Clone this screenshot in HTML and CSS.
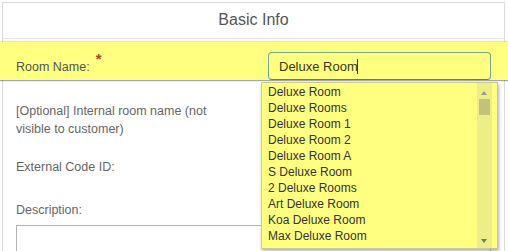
FILE: index.html
```html
<!DOCTYPE html>
<html lang="en">
<head>
    <meta charset="UTF-8">
    <meta name="viewport" content="width=device-width, initial-scale=1.0">
    <link rel="stylesheet" href="styles.css">
    <title>Basic Info</title>
</head>
<body>

<div class="panel">
    <div class="panelHeader">Basic Info</div>

    <!-- Room name row, highlighted -->
    <div class="row highlight">
        <label class="fieldLabel" for="roomName">Room Name:<span class="required">*</span></label>
        <div class="fieldBox">
            <input id="roomName" class="textInput" type="text" value="Deluxe Room">
            <span class="caret"></span>

            <!-- Suggestions -->
            <div class="suggestions">
                <div class="suggestionItem">Deluxe Room</div>
                <div class="suggestionItem">Deluxe Rooms</div>
                <div class="suggestionItem">Deluxe Room 1</div>
                <div class="suggestionItem">Deluxe Room 2</div>
                <div class="suggestionItem">Deluxe Room A</div>
                <div class="suggestionItem">S Deluxe Room</div>
                <div class="suggestionItem">2 Deluxe Rooms</div>
                <div class="suggestionItem">Art Deluxe Room</div>
                <div class="suggestionItem">Koa Deluxe Room</div>
                <div class="suggestionItem">Max Deluxe Room</div>
                <div class="suggestionItem overflowItem">Nav Deluxe Room</div>

                <div class="scrollTrack">
                    <span class="arrowUp"></span>
                    <span class="scrollThumb"></span>
                    <span class="arrowDown"></span>
                </div>
            </div>
        </div>
    </div>

    <div class="row optionalRow">
        <div class="fieldLabel">[Optional] Internal room name (not visible to customer)</div>
    </div>

    <div class="row externalRow">
        <div class="fieldLabel">External Code ID:</div>
    </div>

    <div class="descriptionRow">
        <div class="fieldLabel">Description:</div>
        <textarea class="descriptionBox"></textarea>
    </div>
</div>

</body>
</html>
```

FILE: styles.css
```css
body {
    margin: 0;
    background-color: #fff;
    font-family: 'Liberation Sans', Arial, sans-serif;
    overflow: hidden;
}

.panel {
    margin: 2px 3px 0 2px;
    border: 1px solid #dcdcdc;
    border-bottom: none;
    height: 300px;
}

.panelHeader {
    height: 35px;
    line-height: 34px;
    text-align: center;
    font-size: 16px;
    color: #555;
    border-bottom: 1px solid #e6e6e6;
}

.row {
    display: flex;
    padding-left: 13px;
}

.fieldLabel {
    width: 220px;
    font-size: 12.5px;
    line-height: 18px;
    color: #666;
}

.highlight {
    margin: 3px -4px 0 -3px;
    padding: 10px 0 0 16px;
    height: 28px;
    background-color: #ffff80;
    box-shadow: 0 -1px 1px rgba(0, 0, 0, 0.12), 0 1px 1px rgba(0, 0, 0, 0.35);
}

.highlight .fieldLabel {
    width: 252px;
    padding-top: 5px;
    color: #555;
}

.required {
    position: relative;
    top: -7px;
    margin-left: 6px;
    font-size: 15px;
    font-weight: bold;
    color: #b5421c;
}

.fieldBox {
    position: relative;
    width: 223px;
}

.textInput {
    box-sizing: border-box;
    width: 223px;
    height: 28px;
    margin: 0;
    padding: 0 10px;
    border: 1px solid #74a88c;
    border-bottom-color: #4f7fa6;
    border-radius: 4px;
    background-color: #ffff80;
    font-family: 'Liberation Sans', Arial, sans-serif;
    font-size: 13px;
    color: #3a3a20;
    outline: none;
}

.caret {
    position: absolute;
    left: 89px;
    top: 7px;
    width: 1px;
    height: 15px;
    background-color: #333;
}

.suggestions {
    position: absolute;
    left: -7px;
    top: 30px;
    width: 235px;
    height: 165px;
    border: 1px solid #c8c8a0;
    background-color: #ffff80;
    box-shadow: 1px 2px 3px rgba(0, 0, 0, 0.3);
}

.suggestionItem {
    padding-left: 6px;
    font-size: 12px;
    line-height: 16px;
    color: #333;
    white-space: nowrap;
}

.suggestionItem:first-child {
    margin-top: 1px;
}

.overflowItem {
    margin-top: 4px;
}

.scrollTrack {
    position: absolute;
    top: 0;
    right: 5px;
    width: 15px;
    height: 165px;
    background-color: #eeee86;
}

.scrollThumb {
    position: absolute;
    left: 2px;
    top: 16px;
    width: 11px;
    height: 16px;
    background-color: #c2c27a;
}

.arrowUp,
.arrowDown {
    position: absolute;
    left: 4px;
    width: 0;
    height: 0;
    border-left: 3px solid transparent;
    border-right: 3px solid transparent;
}

.arrowUp {
    top: 8px;
    border-bottom: 4px solid #999;
}

.arrowDown {
    bottom: 5px;
    border-top: 4px solid #777;
}

.optionalRow {
    margin-top: 22px;
}

.externalRow {
    margin-top: 20px;
}

.descriptionRow {
    margin-top: 25px;
    padding-left: 13px;
}

.descriptionRow .fieldLabel {
    width: auto;
}

.descriptionBox {
    display: block;
    box-sizing: border-box;
    width: 475px;
    height: 60px;
    margin-top: 6px;
    border: 1px solid #b4b4b4;
    resize: none;
}
```
